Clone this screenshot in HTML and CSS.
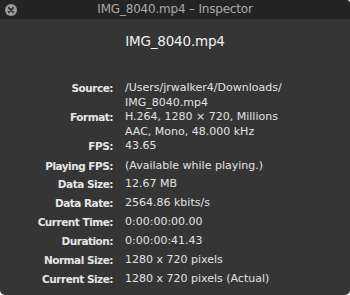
FILE: index.html
```html
<!DOCTYPE html>
<html>
<head>
<meta charset="utf-8">
<link rel="stylesheet" href="styles.css">
</head>
<body>
<div class="window">
  <div class="titlebar">
    <span class="close"><svg width="12" height="12" viewBox="0 0 12 12"><circle cx="6" cy="6" r="6" fill="#9a9a9a"/><path d="M3.8 3.8 L8.2 8.2 M8.2 3.8 L3.8 8.2" stroke="#2a2a2a" stroke-width="1.8" stroke-linecap="round"/></svg></span>
    <span class="title">IMG_8040.mp4 – Inspector</span>
  </div>
  <div class="content">
    <h1 class="heading">IMG_8040.mp4</h1>
    <div class="info">
      <div class="label">Source:</div><div class="value">/Users/jrwalker4/Downloads/<br>IMG_8040.mp4</div>
      <div class="label">Format:</div><div class="value">H.264, 1280 × 720, Millions<br>AAC, Mono, 48.000 kHz</div>
      <div class="label">FPS:</div><div class="value">43.65</div>
      <div class="label sp1">Playing FPS:</div><div class="value sp1">(Available while playing.)</div>
      <div class="label sp2">Data Size:</div><div class="value sp2">12.67 MB</div>
      <div class="label sp3">Data Rate:</div><div class="value sp3">2564.86 kbits/s</div>
      <div class="label sp3">Current Time:</div><div class="value sp3">0:00:00:00.00</div>
      <div class="label sp3">Duration:</div><div class="value sp3">0:00:00:41.43</div>
      <div class="label sp3">Normal Size:</div><div class="value sp3">1280 x 720 pixels</div>
      <div class="label sp3">Current Size:</div><div class="value sp3">1280 x 720 pixels (Actual)</div>
    </div>
  </div>
</div>
</body>
</html>
```
FILE: styles.css
```css
html, body {
  margin: 0;
  padding: 0;
  background: #ffffff;
}
body {
  width: 350px;
  height: 295px;
  overflow: hidden;
  font-family: "DejaVu Sans", "Liberation Sans", sans-serif;
}
.window {
  width: 350px;
  height: 295px;
  background: #353535;
  border-radius: 0 4px 5px 5px;
  overflow: hidden;
  display: flex;
  flex-direction: column;
}
.titlebar {
  height: 19px;
  background: #242424;
  position: relative;
  display: flex;
  align-items: center;
  justify-content: center;
}
.close {
  position: absolute;
  left: 5px;
  top: 4px;
  width: 12px;
  height: 12px;
  display: block;
}
.close svg { display: block; }
.title {
  color: #a9a9a9;
  font-size: 12px;
  letter-spacing: -0.2px;
  line-height: 19px;
}
.content {
  flex: 1;
}
.heading {
  margin: 13px 0 0 0;
  text-align: center;
  color: #f0f0f0;
  font-weight: normal;
  font-size: 13.5px;
  line-height: 18px;
  letter-spacing: -0.2px;
}
.info {
  margin-top: 31px;
  display: grid;
  grid-template-columns: 114px 1fr;
  column-gap: 11px;
  row-gap: 0;
  font-size: 11px;
  line-height: 14.5px;
  color: #e2e2e2;
}
.label {
  text-align: right;
  font-weight: bold;
  font-size: 10.5px;
  letter-spacing: -0.5px;
  padding-right: 1px;
  color: #e6e6e6;
}
.value {
  white-space: nowrap;
}
.sp1 { margin-top: 5.5px; }
.sp2 { margin-top: 3.5px; }
.sp3 { margin-top: 4.5px; }
```
